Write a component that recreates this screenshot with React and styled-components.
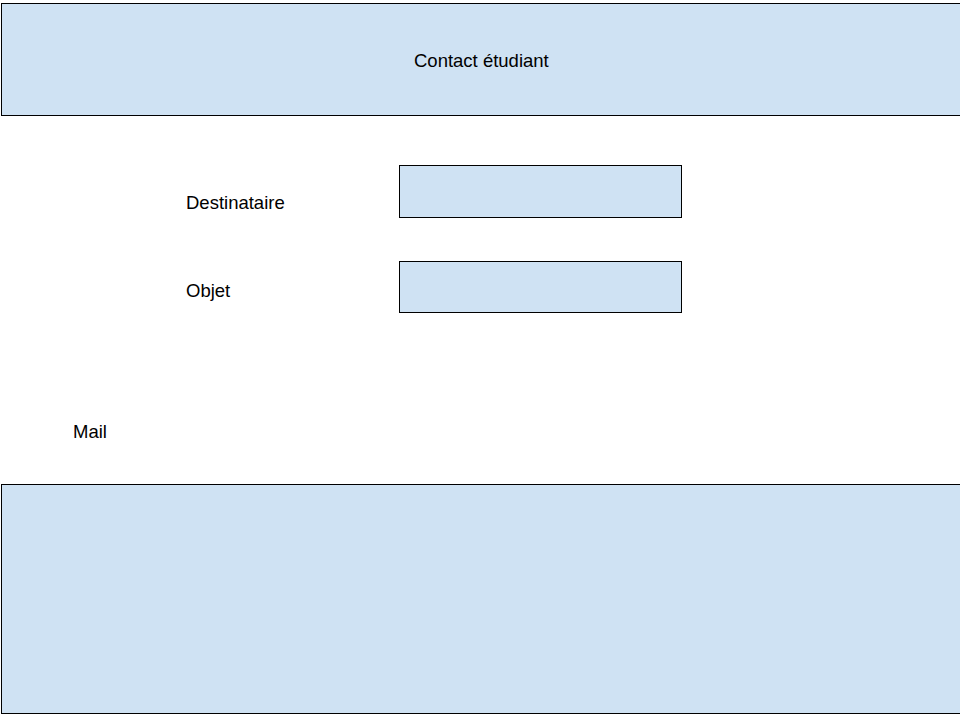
import styled, { createGlobalStyle } from "styled-components";

const GlobalStyle = createGlobalStyle`
  html, body {
    margin: 0;
    padding: 0;
    background: #ffffff;
    overflow: hidden;
  }
  body {
    font-family: "Liberation Sans", Arial, sans-serif;
    color: #000000;
  }
`;

const Page = styled.div`
  width: 960px;
  height: 720px;
  overflow: hidden;
  padding: 3px 0 0 1px;
  box-sizing: border-box;
`;

const Banner = styled.header`
  width: 980px;
  height: 113px;
  box-sizing: border-box;
  border: 1px solid #000;
  background: #cfe2f3;
  display: flex;
  align-items: center;
  padding: 3px 0 0 412px;
  font-size: 18.5px;
`;

const Form = styled.div`
  display: grid;
  grid-template-columns: 213px 283px;
  row-gap: 43px;
  margin: 49px 0 0 185px;
`;

const Label = styled.label`
  font-size: 18.5px;
  line-height: 21px;
  padding-top: ${({ $offset }) => $offset}px;
`;

const Field = styled.div`
  height: ${({ $h }) => $h}px;
  box-sizing: border-box;
  border: 1px solid #000;
  background: #cfe2f3;
`;

const MailLabel = styled.div`
  font-size: 18.5px;
  line-height: 21px;
  margin: 108px 0 0 72px;
`;

const MailBox = styled.div`
  width: 980px;
  height: 230px;
  box-sizing: border-box;
  margin-top: 42px;
  border: 1px solid #000;
  background: #cfe2f3;
`;

export default function App() {
  return (
    <>
      <GlobalStyle />
      <Page>
        <Banner>Contact étudiant</Banner>
        <Form>
          <Label $offset={27}>Destinataire</Label>
          <Field $h={53} />
          <Label $offset={19}>Objet</Label>
          <Field $h={52} />
        </Form>
        <MailLabel>Mail</MailLabel>
        <MailBox />
      </Page>
    </>
  );
}
